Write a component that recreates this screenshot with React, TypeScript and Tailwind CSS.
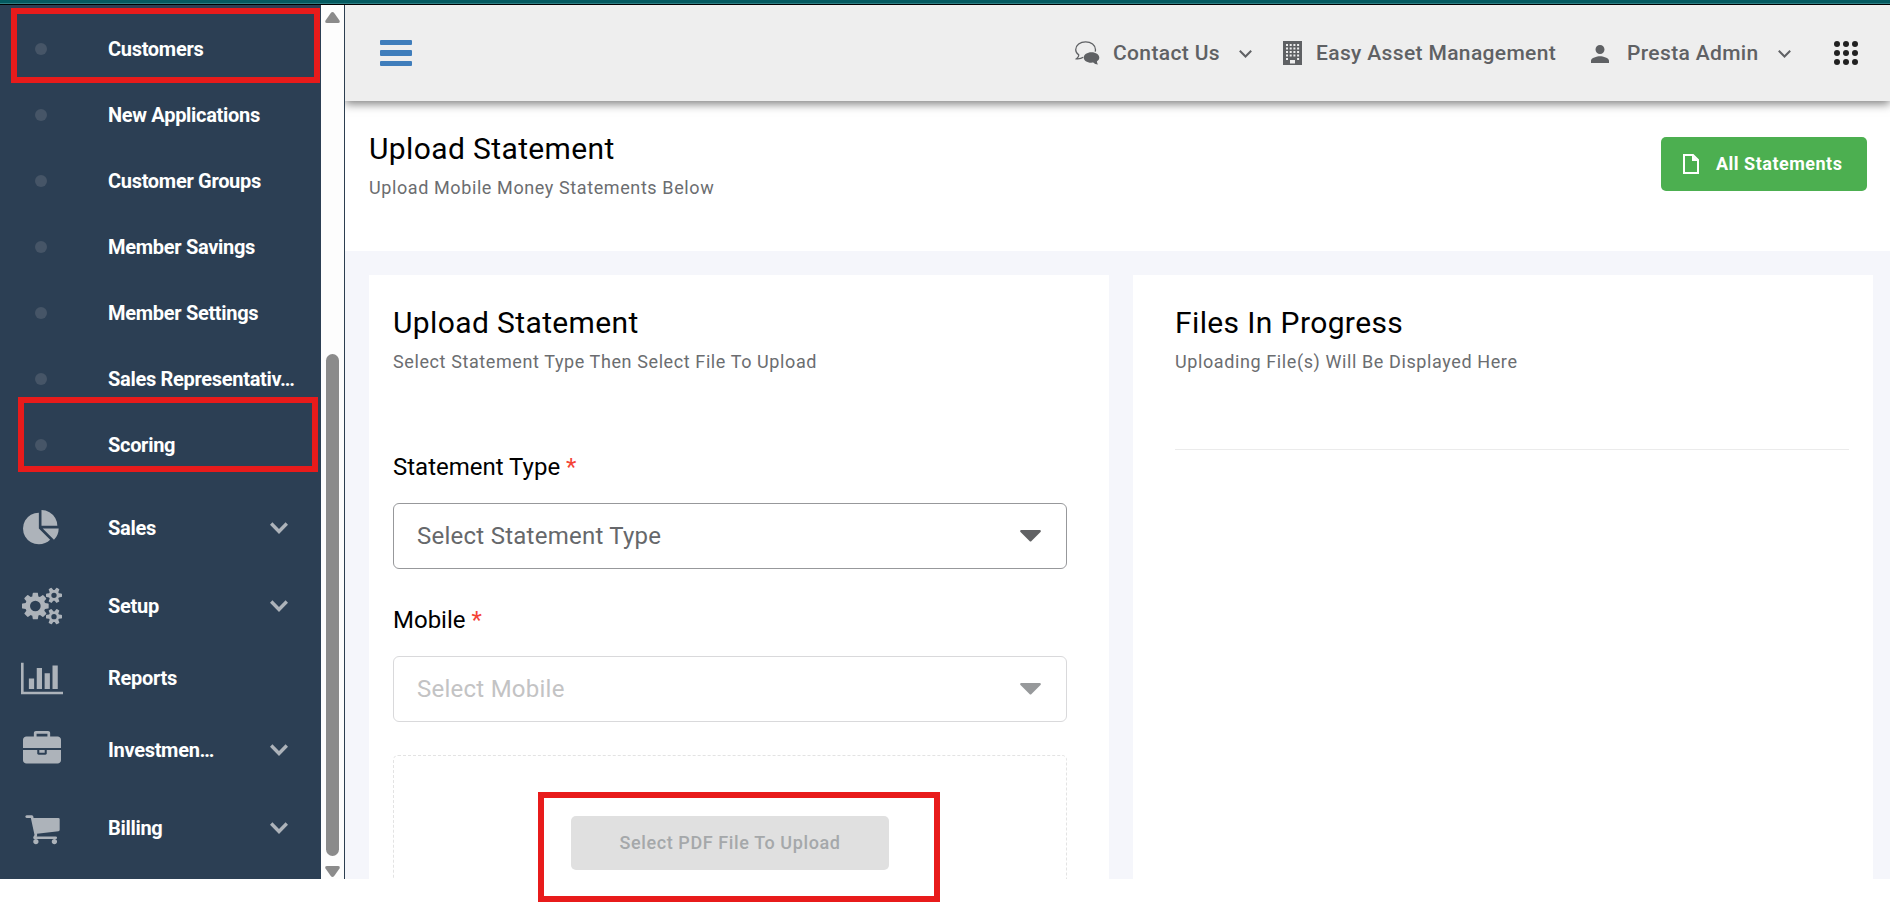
import type { ReactNode } from "react";

const menuItems = [
  "Customers",
  "New Applications",
  "Customer Groups",
  "Member Savings",
  "Member Settings",
  "Sales Representativ…",
  "Scoring",
];

export default function App() {
  return (
    <div className="relative h-[902px] w-[1890px] overflow-hidden bg-white font-['Roboto',sans-serif]">
      <div className="h-[5px] border-b border-black bg-[#045a60]">
        <div className="h-1 border-b border-[#2f7f84]" />
      </div>

      <div className="flex h-[874px] overflow-hidden">
        <Sidebar />
        <Scrollbar />
        <div className="flex min-w-0 flex-1 flex-col overflow-hidden border-l border-[#2c3e50] bg-[#f5f6fb]">
          <Header />
          <PageTitle />
          <main className="flex flex-1 gap-6 overflow-hidden pt-6 pr-[17px] pl-6">
            <UploadCard />
            <ProgressCard />
          </main>
        </div>
      </div>

      {/* Callouts */}
      <div className="absolute top-2 left-[11px] h-[75px] w-[309px] border-[6px] border-[#e81b1b]" />
      <div className="absolute top-[397px] left-[18px] h-[75px] w-[300px] border-[6px] border-[#e81b1b]" />
      <div className="absolute top-[792px] left-[538px] h-[110px] w-[402px] border-[6px] border-[#e81b1b]" />
    </div>
  );
}

function Sidebar() {
  return (
    <nav className="w-[321px] shrink-0 bg-[#2c3f54] pt-[11px] text-xl font-bold tracking-[-0.3px] text-white">
      {menuItems.map((item) => (
        <div key={item} className="flex h-[66px] items-center pl-[35px]">
          <span className="h-3 w-3 rounded-full bg-[#465567]" />
          <span className="ml-[61px] whitespace-nowrap">{item}</span>
        </div>
      ))}
      <div className="pt-[11px]">
        <SidebarGroup label="Sales" icon={<PieIcon className="ml-[23px] h-[37px] w-[37px]" />} height="h-[78px]" arrow />
        <SidebarGroup label="Setup" icon={<CogsIcon className="ml-[22px] h-[38px] w-[40px]" />} height="h-[78px]" arrow />
        <SidebarGroup label="Reports" icon={<ChartIcon className="ml-[21px] h-[37px] w-[42px]" />} height="h-[66px]" />
        <SidebarGroup label="Investmen…" icon={<BriefcaseIcon className="ml-[23px] h-[38px] w-[38px]" />} height="h-[78px]" arrow />
        <SidebarGroup label="Billing" icon={<CartIcon className="ml-6 h-[37px] w-[37px]" />} height="h-[78px]" arrow />
      </div>
    </nav>
  );
}

function SidebarGroup({
  label,
  icon,
  height,
  arrow,
}: {
  label: string;
  icon: ReactNode;
  height: string;
  arrow?: boolean;
}) {
  return (
    <div className={`flex items-center ${height}`}>
      <div className="w-[108px] shrink-0 text-[#adb3ba]">{icon}</div>
      <span className="w-[110px] whitespace-nowrap">{label}</span>
      {arrow && (
        <svg className="ml-[52px] h-3 w-[18px] text-[#adb3ba]" viewBox="0 0 18 12" fill="none" stroke="currentColor" strokeWidth="3.4">
          <path d="m1.2 1.5 7.8 8 7.8-8" />
        </svg>
      )}
    </div>
  );
}

function Scrollbar() {
  return (
    <div className="flex w-[23px] shrink-0 flex-col items-center bg-[#fdfdfd] text-[#8b8b8b]">
      <svg className="mt-[7px] h-[11px] w-[15px]" viewBox="0 0 15 11" fill="currentColor">
        <path d="M5.8 1Q7.5-1 9.2 1l5.3 7.5Q15.5 11 13 11H2Q-.5 11 .5 8.5Z" />
      </svg>
      <div className="mt-[331px] h-[502px] w-[13px] rounded-full bg-[#8b8b8b]" />
      <svg className="mt-[10px] h-[11px] w-[15px]" viewBox="0 0 15 11" fill="currentColor">
        <path d="M5.8 10Q7.5 12 9.2 10l5.3-7.500Q15.5 0 13 0H2Q-.5 0 .5 2.5Z" />
      </svg>
    </div>
  );
}

function Header() {
  return (
    <header className="relative z-10 flex h-24 shrink-0 items-center bg-[#eeeeee] text-[21px] font-medium tracking-[0.36px] text-[#5f6164] shadow-[0_3px_9px_rgba(0,0,0,0.5)]">
      <div className="ml-[35px] flex flex-col gap-[5px]">
        <span className="h-[5.5px] w-8 rounded-[1px] bg-[#3f7dbb]" />
        <span className="h-[5.5px] w-8 rounded-[1px] bg-[#3f7dbb]" />
        <span className="h-[5.5px] w-8 rounded-[1px] bg-[#3f7dbb]" />
      </div>
      <ChatIcon className="ml-[663px] h-6 w-[25px]" />
      <span className="ml-[13px] w-[107px] pt-0.5 whitespace-nowrap">Contact Us</span>
      <ChevronIcon className="mt-px ml-[19px] h-2 w-[13px]" />
      <BuildingIcon className="ml-[31px] h-6 w-[19px]" />
      <span className="ml-[14px] w-[241px] pt-0.5 whitespace-nowrap">Easy Asset Management</span>
      <svg className="mt-0.5 ml-[34px] h-[18px] w-[18px]" viewBox="4 4 16 16" fill="currentColor">
        <path d="M12 12c2.210 0 4-1.790 4-4s-1.790-4-4-4-4 1.790-4 4 1.790 4 4 4zm0 2c-2.670 0-8 1.340-8 4v2h16v-2c0-2.660-5.330-4-8-4z" />
      </svg>
      <span className="ml-[18px] w-[133px] pt-0.5 whitespace-nowrap">Presta Admin</span>
      <ChevronIcon className="mt-px ml-[18px] h-2 w-[13px]" />
      <div className="mb-px ml-[43px] grid grid-cols-3 gap-[3px]">
        {Array.from({ length: 9 }, (_, i) => (
          <span key={i} className="h-1.5 w-1.5 rounded-full bg-[#212121]" />
        ))}
      </div>
    </header>
  );
}

function PageTitle() {
  return (
    <div className="flex h-[150px] shrink-0 items-start justify-between bg-white pt-7 pr-[23px] pl-6">
      <Heading title="Upload Statement" subtitle="Upload Mobile Money Statements Below" />
      <button className="mt-2 flex h-[54px] w-[206px] items-center rounded-[5px] bg-[#4caf50] pl-[22px] text-lg font-bold tracking-[0.5px] text-white">
        <svg className="h-5 w-4" viewBox="0 0 16 20" fill="none" stroke="currentColor" strokeWidth="2">
          <path d="M1 1h9l5 5v13H1z" />
          <path d="M9 1v6h6z" fill="currentColor" stroke="none" />
        </svg>
        <span className="ml-[17px] whitespace-nowrap">All Statements</span>
      </button>
    </div>
  );
}

function Heading({ title, subtitle }: { title: string; subtitle: string }) {
  return (
    <div>
      <h2 className="text-[30px] leading-10 tracking-[0.38px] text-black">{title}</h2>
      <p className="mt-[5px] text-lg leading-7 tracking-[0.6px] text-[#6b6d70]">{subtitle}</p>
    </div>
  );
}

function UploadCard() {
  return (
    <section className="w-[740px] shrink-0 bg-white pt-7 pr-[42px] pl-6">
      <Heading title="Upload Statement" subtitle="Select Statement Type Then Select File To Upload" />
      <div className="pt-[73px]">
        <Field label="Statement Type" placeholder="Select Statement Type" />
        <Field label="Mobile" placeholder="Select Mobile" disabled />
      </div>
      <div className="flex h-[180px] justify-center rounded-[5px] border border-dashed border-[#e3e3e3] pt-[60px]">
        <button className="h-[54px] w-[318px] rounded-[5px] bg-[#e0e0e0] text-lg font-medium tracking-[0.6px] text-[#a5a8aa]">
          Select PDF File To Upload
        </button>
      </div>
    </section>
  );
}

function Field({ label, placeholder, disabled }: { label: string; placeholder: string; disabled?: boolean }) {
  return (
    <div className="mb-[33px]">
      <div className="h-9 text-2xl leading-9 text-black">
        {label} <span className="text-[#f44336]">*</span>
      </div>
      <div
        className={`mt-[18px] flex h-[66px] items-center justify-between rounded-[6px] border pr-[25px] pl-[23px] text-2xl ${
          disabled ? "border-[#d9d9db] text-[#c3c3c4]" : "border-[#97989b] text-[#66686b]"
        }`}
      >
        <span className="tracking-[0.25px]">{placeholder}</span>
        <svg className={`h-3 w-[21px] ${disabled ? "text-[#97999b]" : "text-[#616264]"}`} viewBox="0 0 21 12" fill="currentColor">
          <path d="M1 0h19q1.5.5.5 2l-9 9q-1 1-2 0l-9-9Q-.5.5 1 0Z" />
        </svg>
      </div>
    </div>
  );
}

function ProgressCard() {
  return (
    <section className="w-[740px] shrink-0 bg-white pt-7 pr-6 pl-[42px]">
      <Heading title="Files In Progress" subtitle="Uploading File(s) Will Be Displayed Here" />
      <hr className="mt-[73px] border-[#ebebeb]" />
    </section>
  );
}

// Icon Components
function ChevronIcon({ className }: { className: string }) {
  return (
    <svg className={className} viewBox="0 0 13 8" fill="none" stroke="currentColor" strokeWidth="2">
      <path d="m.8.8 5.700 5.700 5.700-5.700" />
    </svg>
  );
}

function ChatIcon({ className }: { className: string }) {
  return (
    <svg className={className} viewBox="0 0 25 24" fill="none" stroke="currentColor" strokeWidth="1.3">
      <path d="M8.200 16.300C6.500 17.500 4 18 1.500 17.800 3.300 16.500 3.900 15.200 3.700 13.800 1.800 12.500.7 10.700.7 8.700.7 4.300 5.200.8 10.600.8s9.900 3.500 9.900 7.900q0 1-.3 1.900" />
      <path d="M16.500 11.200c4.300 0 7.800 2.400 7.800 5.300 0 1.600-.9 2.900-2.300 3.800-.1 1.300.4 2.500 1.200 3.300-2.200 0-3.900-.8-4.900-2-5.600.8-9.600-1.800-9.600-5.100 0-2.900 3.500-5.300 7.800-5.300Z" fill="currentColor" stroke="none" />
    </svg>
  );
}

function BuildingIcon({ className }: { className: string }) {
  return (
    <svg className={className} viewBox="0 0 19 24">
      <path d="M0 0h19v24H0z" fill="currentColor" />
      {[4, 7.5, 11, 14.5].map((y) => (
        <path key={y} d={`M3 ${y}h2m1.700 0h2m1.700 0h2m1.700 0h2`} stroke="#eeeeee" strokeWidth="1.800" />
      ))}
      <path d="M3 18h2m9.100 0h2" stroke="#eeeeee" strokeWidth="1.800" />
      <path d="M7 19h5v3.500H7z" fill="#eeeeee" />
    </svg>
  );
}

function PieIcon({ className }: { className: string }) {
  return (
    <svg className={className} viewBox="0 0 1792 1792" fill="currentColor">
      <path d="M768 890l546 546q-106 108-247.500 168t-298.500 60q-209 0-385.500-103t-279.500-279.500-103-385.500 103-385.500 279.500-279.500 385.500-103v762zm187 6h773q0 157-60 298.500t-168 247.500zm709-128h-768v-768q209 0 385.500 103t279.500 279.500 103 385.500z" />
    </svg>
  );
}

function CogsIcon({ className }: { className: string }) {
  const smallCog =
    "M1920 1338v140q0 16-149 31-12 27-30 52 51 113 51 138 0 4-4 7-122 71-124 71-8 0-46-47t-52-68q-20 2-30 2t-30-2q-14 21-52 68t-46 47q-2 0-124-71-4-3-4-7 0-25 51-138-18-25-30-52-149-15-149-31v-140q0-16 149-31 13-29 30-52-51-113-51-138 0-4 4-7 4-2 35-20t59-34 30-16q8 0 46 46.500t52 67.500q20-2 30-2t30 2q51-71 92-112l6-2q4 0 124 70 4 3 4 7 0 25-51 138 17 23 30 52 149 15 149 31zM1664 1408a128 128 0 1 0-256 0 128 128 0 1 0 256 0z";

  return (
    <svg className={className} viewBox="0 0 1920 1792" fill="currentColor">
      <path d="M896 896q0-106-75-181t-181-75-181 75-75 181 75 181 181 75 181-75 75-181zm384-91v185q0 10-7 19.500t-16 10.500l-155 24q-11 35-32 76 34 48 90 115 7 11 7 20 0 12-7 19-23 30-82.500 89.500t-78.500 59.500q-11 0-21-7l-115-90q-37 19-77 31-11 108-23 155-7 24-30 24h-186q-11 0-20-7.500t-10-17.500l-23-153q-34-10-75-31l-118 89q-7 7-20 7-11 0-21-8-144-133-144-160 0-9 7-19 10-14 41-53t47-61q-23-44-35-82l-152-24q-10-1-17-9.500t-7-19.500v-185q0-10 7-19.500t16-10.500l155-24q11-35 32-76-34-48-90-115-7-11-7-20 0-12 7-20 22-30 82-89t79-59q11 0 21 7l115 90q34-18 77-32 11-108 23-154 7-24 30-24h186q11 0 20 7.500t10 17.500l23 153q34 10 75 31l118-89q8-7 20-7 11 0 21 8 144 133 144 160 0 8-7 19-12 16-42 54t-45 60q23 48 34 82l152 23q10 2 17 10.500t7 19.500z" />
      <path d={smallCog} fillRule="evenodd" />
      <path d={smallCog} fillRule="evenodd" transform="translate(0 -1024)" />
    </svg>
  );
}

function ChartIcon({ className }: { className: string }) {
  return (
    <svg className={className} viewBox="0 0 2048 1792" fill="currentColor">
      <path d="M640 896v512h-256v-512h256zm384-512v1024h-256v-1024h256zm1024 1152v128h-2048v-1536h128v1408h1920zm-640-896v768h-256v-768h256zm384-384v1152h-256v-1152h256z" />
    </svg>
  );
}

function BriefcaseIcon({ className }: { className: string }) {
  return (
    <svg className={className} viewBox="0 0 1792 1792" fill="currentColor">
      <path d="M640 256h512v-128h-512v128zm1152 640v480q0 66-47 113t-113 47h-1472q-66 0-113-47t-47-113v-480h672v160q0 26 19 45t45 19h320q26 0 45-19t19-45v-160h672zm-768 0v128h-256v-128h256zm768-480v384h-1792v-384q0-66 47-113t113-47h352v-160q0-40 28-68t68-28h576q40 0 68 28t28 68v160h352q66 0 113 47t47 113z" />
    </svg>
  );
}

function CartIcon({ className }: { className: string }) {
  return (
    <svg className={className} viewBox="0 0 1792 1792" fill="currentColor">
      <path d="M704 1536q0 52-38 90t-90 38-90-38-38-90 38-90 90-38 90 38 38 90zm896 0q0 52-38 90t-90 38-90-38-38-90 38-90 90-38 90 38 38 90zm128-1088v512q0 24-16.500 42.500t-40.500 21.500l-1044 122q13 60 13 70 0 16-24 64h920q26 0 45 19t19 45-19 45-45 19h-1024q-26 0-45-19t-19-45q0-11 8-31.500t16-36 21.500-40 15.500-29.500l-177-823h-204q-26 0-45-19t-19-45 19-45 45-19h256q16 0 28.500 6.500t19.500 15.500 13 24.500 8 26 5.500 29.500 4.500 26h1201q26 0 45 19t19 45z" />
    </svg>
  );
}
